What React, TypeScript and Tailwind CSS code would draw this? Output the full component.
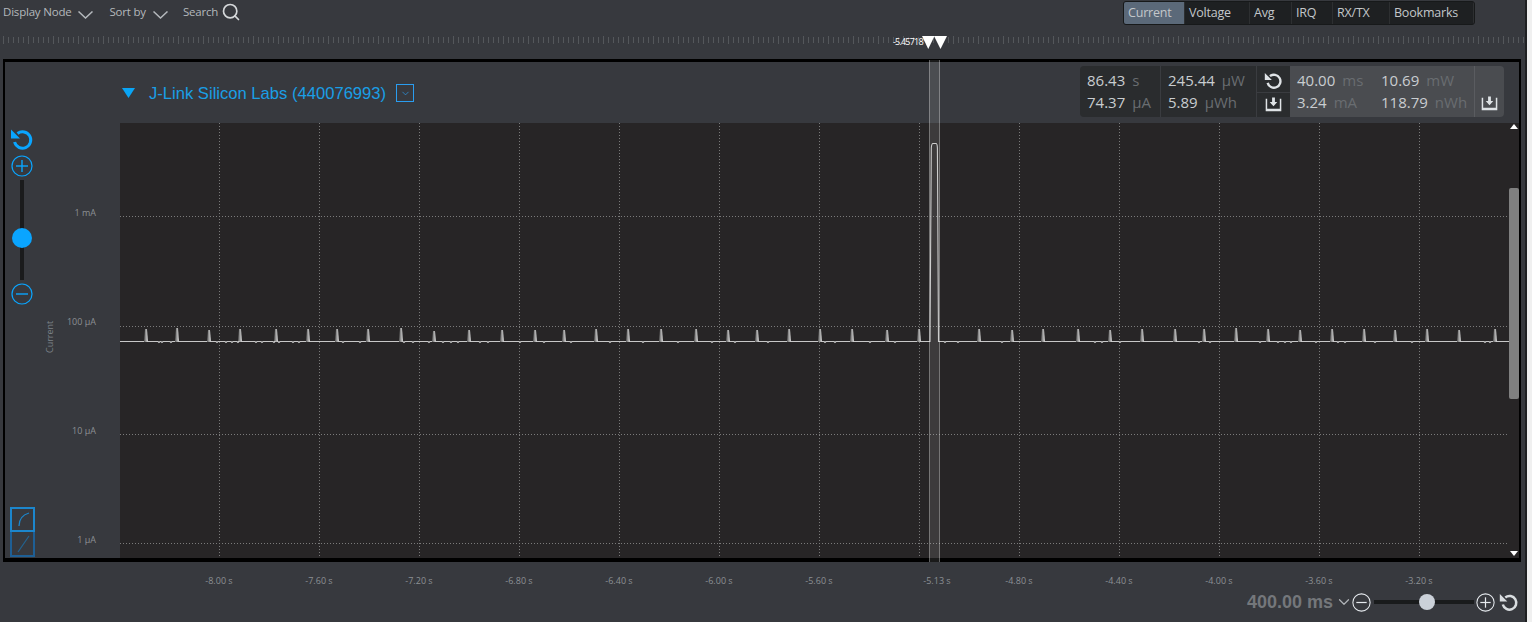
import { ChevronDown, Search } from "lucide-react";

const tabs = [
  { label: "Current", width: "w-[61px]", active: true },
  { label: "Voltage", width: "w-[65px]" },
  { label: "Avg", width: "w-[42px]" },
  { label: "IRQ", width: "w-[41px]" },
  { label: "RX/TX", width: "w-[57px]" },
  { label: "Bookmarks", width: "w-[84px]" },
];

const timeLabels = ["-8.00 s", "-7.60 s", "-7.20 s", "-6.80 s", "-6.40 s", "-6.00 s", "-5.60 s"];
const timeLabelsAfter = ["-4.80 s", "-4.40 s", "-4.00 s", "-3.60 s", "-3.20 s"];

// x position and top of every small peak, in page pixels
const peaks = [
  [146, 329], [177, 328], [209, 330], [240, 329], [276, 329], [308, 329], [337, 329], [368, 329],
  [401, 328], [434, 331], [469, 330], [502, 330], [535, 330], [564, 330], [596, 329], [628, 329],
  [661, 329], [696, 329], [728, 330], [757, 330], [789, 329], [820, 329], [852, 329], [887, 330],
  [919, 329], [979, 329], [1012, 330], [1043, 329], [1078, 329], [1110, 330], [1142, 329],
  [1175, 329], [1204, 329], [1236, 328], [1268, 329], [1300, 330], [1332, 329], [1364, 329],
  [1395, 330], [1427, 329], [1459, 330], [1495, 329],
];
const ripples = [159, 162, 171, 217, 226, 232, 238, 256, 262, 274, 279, 293, 299, 343, 360, 404, 413, 429, 443, 451, 458, 480, 488, 520, 544, 571, 610, 643, 678, 712, 735, 768, 825, 835, 870, 895, 945, 958, 1002, 1095, 1102, 1120, 1199, 1210, 1260, 1278, 1285, 1291, 1316, 1338, 1345, 1375, 1412, 1485, 1490];

const plotX = 120;
const plotY = 123;
const baseY = 218.5;

function tracePath() {
  const xs = [...peaks.map((p) => p[0]), ...ripples].sort((a, b) => a - b);
  let d = `M0 ${baseY}`;
  let bigDone = false;
  for (const px of xs) {
    const x = px - plotX;
    if (!bigDone && px > 930) {
      d += ` L810 ${baseY} L811.3 25 Q811.6 20.5 813 20.5 H816 Q817.2 20.5 817.4 25 L818.5 ${baseY}`;
      bigDone = true;
    }
    if (ripples.includes(px)) {
      d += ` L${x - 1} ${baseY} L${x} ${baseY + 1} L${x + 1} ${baseY}`;
    } else {
      d += ` L${x - 2} ${baseY} M${x + 2} ${baseY}`;
    }
  }
  return d + " L1389 " + baseY;
}

function Chevron({ className }: { className: string }) {
  return (
    <svg viewBox="0 0 15 8" className={`h-[8px] w-[15px] ${className}`} fill="none" stroke="currentColor" strokeWidth="1.5">
      <path d="M0.5 0.5L7.5 7L14.5 0.5" />
    </svg>
  );
}

function ResetIcon({ className }: { className: string }) {
  return (
    <svg viewBox="0 0 24 24" className={className} fill="none">
      <path d="M7.5 6.5A8.2 8.2 0 1 1 4.6 15" stroke="currentColor" strokeWidth="3" />
      <path d="M1 2.5V11.5H10Z" fill="currentColor" />
    </svg>
  );
}

function SaveIcon() {
  return (
    <svg viewBox="0 0 17 17" className="h-[16px] w-[17px] text-[#dfe3e6]" fill="none">
      <path d="M1 3V15.5H16V3" stroke="currentColor" strokeWidth="1.6" />
      <path d="M1 13.5H16V16H1Z" fill="currentColor" />
      <path d="M7 1.5H10V6.5H12.5L8.5 11L4.5 6.5H7Z" fill="currentColor" />
    </svg>
  );
}

function CircleButton({ plus, className, size }: { plus?: boolean; className: string; size: string }) {
  return (
    <svg viewBox="0 0 22 22" className={`${size} ${className}`} fill="none" stroke="currentColor">
      <circle cx="11" cy="11" r="10" strokeWidth="1.2" />
      <path d="M5 11H17" strokeWidth="1.4" />
      {plus && <path d="M11 5V17" strokeWidth="1.4" />}
    </svg>
  );
}

function Stat({ value, unit }: { value: string; unit: string }) {
  return (
    <div className="whitespace-nowrap">
      <span className="text-[#c9cdd0]">{value}</span>
      <span className="ml-[7px] text-[#696d71]">{unit}</span>
    </div>
  );
}

function Plot() {
  const hLines = [216, 326, 434, 543];
  const vLines = [219, 319, 419, 519, 619, 719, 819, 919, 1019, 1119, 1219, 1319, 1419];
  return (
    <svg viewBox="0 0 1399 435" className="h-[435px] w-[1399px]" fill="none">
      <defs>
        <linearGradient id="peak" x1="0" x2="1" y1="0" y2="0">
          <stop offset="0" stopColor="#5c5c5c" />
          <stop offset="0.5" stopColor="#9c9c9c" />
          <stop offset="1" stopColor="#e4e4e4" />
        </linearGradient>
      </defs>
      <g stroke="#7b7b7b" strokeDasharray="1 2">
        {hLines.map((y) => (
          <path key={y} d={`M0 ${y - plotY + 0.5}H1389`} />
        ))}
        {vLines.map((x) => (
          <path key={x} d={`M${x - plotX + 0.5} 0V435`} />
        ))}
      </g>
      {peaks.map(([x, top]) => (
        <path
          key={x}
          d={`M${x - plotX - 2} ${baseY + 0.5}L${x - plotX - 1} ${top - plotY}H${x - plotX + 1}L${x - plotX + 2} ${baseY + 0.5}Z`}
          fill="url(#peak)"
        />
      ))}
      <path d={tracePath()} stroke="#c8c8c8" strokeWidth="1.1" />
    </svg>
  );
}

export default function App() {
  return (
    <div
      className="flex h-[622px] w-[1532px] overflow-hidden bg-[#37393e] text-[11.5px] tracking-[-0.2px] text-[#b4b8bc]"
      style={{ fontFamily: '"Open Sans", sans-serif' }}
    >
      <div className="flex w-[1525px] flex-col">
        {/* top toolbar */}
        <div className="flex h-[26px] items-center justify-between pr-[50px] pl-[3px]">
          <div className="flex items-center pb-[2px]">
            <span>Display Node</span>
            <Chevron className="mt-[6px] ml-[7px]" />
            <span className="ml-[16px]">Sort by</span>
            <Chevron className="mt-[6px] ml-[7px]" />
            <span className="ml-[15px]">Search</span>
            <Search className="ml-[3px] h-[20px] w-[20px] text-[#d5d8da]" strokeWidth={2} />
          </div>
          <div className="flex h-[24px] overflow-hidden rounded-[3px] border border-[#17191a] bg-[#1e2022] text-[12.5px] text-[#c3c7ca]">
            {tabs.map((tab) => (
              <div
                key={tab.label}
                className={`flex items-center border-r border-[#2d2f31] pl-[4px] ${tab.width} ${tab.active ? "bg-[#5b6979]" : ""}`}
              >
                {tab.label}
              </div>
            ))}
          </div>
        </div>

        {/* time ruler */}
        <div className="relative h-[33px]">
          <svg className="mt-[9px] h-[12px] w-[1525px]" fill="none">
            <defs>
              <pattern id="ticks" width="25" height="12" patternUnits="userSpaceOnUse">
                <path d="M3.5 1V9M8.5 2V8M13.5 2V8M18.5 2V8M23.5 2V8" stroke="#54575b" />
              </pattern>
            </defs>
            <rect width="1525" height="12" fill="url(#ticks)" />
          </svg>
          <span className="absolute top-[10px] left-[893px] text-[9px] leading-[12px] tracking-[-0.8px] whitespace-nowrap text-white">
            -5.45718
          </span>
          <svg viewBox="0 0 25 13" className="absolute top-[10px] left-[922px] h-[13px] w-[25px]" fill="#fff">
            <path d="M0 0H12.5L6.25 13Z" />
            <path d="M12 0H25L18.5 13Z" />
          </svg>
        </div>

        {/* main panel */}
        <div className="relative ml-[3px] flex h-[503px] w-[1518px] flex-col border-x-2 border-t-[3px] border-b-4 border-black">
          <div className="flex h-[61px] items-center pr-[15px] pl-[117px] tracking-normal">
            <svg viewBox="0 0 13 10" className="h-[10px] w-[13px] text-[#0aa5f5]" fill="currentColor">
              <path d="M0 0H13L6.5 10Z" />
            </svg>
            <span
              className="mt-[3px] ml-[14px] text-[16.6px] text-[#1a9fe6]"
              style={{ fontFamily: '"Liberation Sans", sans-serif' }}
            >
              J-Link Silicon Labs (440076993)
            </span>
            <div className="mt-[1px] ml-[10px] flex h-[18px] w-[18px] items-center justify-center border border-[#2a9df0]">
              <ChevronDown className="h-[11px] w-[11px] text-[#2a9df0]" strokeWidth={1.5} />
            </div>

            {/* readouts */}
            <div className="mt-[-3px] ml-auto flex h-[51px] overflow-hidden rounded-[4px] text-[15px] leading-[22px]">
              <div className="flex bg-[#2a2c2e]">
                <div className="flex w-[81px] flex-col justify-center border-r border-[#3a3c40] pl-[7px]">
                  <Stat value="86.43" unit="s" />
                  <Stat value="74.37" unit="µA" />
                </div>
                <div className="flex w-[96px] flex-col justify-center border-r border-[#3a3c40] pl-[7px]">
                  <Stat value="245.44" unit="µW" />
                  <Stat value="5.89" unit="µWh" />
                </div>
                <div className="flex w-[33px] flex-col">
                  <div className="flex flex-1 items-center justify-center border-b border-[#3a3c40] pt-[3px]">
                    <ResetIcon className="h-[19px] w-[19px] text-[#dfe3e6]" />
                  </div>
                  <div className="flex flex-1 items-center justify-center pb-[1px]">
                    <SaveIcon />
                  </div>
                </div>
              </div>
              <div className="flex bg-[#4a4c50]">
                <div className="flex w-[91px] flex-col justify-center pl-[7px]">
                  <Stat value="40.00" unit="ms" />
                  <Stat value="3.24" unit="mA" />
                </div>
                <div className="flex w-[94px] flex-col justify-center border-r border-[#5a5c60]">
                  <Stat value="10.69" unit="mW" />
                  <Stat value="118.79" unit="nWh" />
                </div>
                <div className="flex w-[29px] items-end justify-center pb-[6px]">
                  <SaveIcon />
                </div>
              </div>
            </div>
          </div>

          <div className="flex flex-1">
            {/* left gutter */}
            <div className="flex w-[115px]">
              <div className="flex w-[34px] flex-col items-center pt-[4px] text-[#0aa5ff]">
                <ResetIcon className="h-[24px] w-[24px]" />
                <CircleButton plus className="mt-[4px]" size="h-[22px] w-[22px]" />
                <div className="relative mt-[3px] h-[100px] w-[4px] bg-[#1a1b1c]">
                  <div className="absolute top-[48px] left-[-8px] h-[20px] w-[20px] rounded-full bg-[#0aa5ff]" />
                </div>
                <CircleButton className="mt-[3px]" size="h-[22px] w-[22px]" />
                <div className="mt-auto mb-[1px] flex w-[25px] flex-col">
                  <div className="h-[25px] border-2 border-[#1c86cc]">
                    <svg viewBox="0 0 21 21" className="h-[21px] w-[21px]" fill="none" stroke="#1c86cc" strokeWidth="1.3">
                      <path d="M7 17C7 10 10 6 17 4" />
                    </svg>
                  </div>
                  <div className="h-[25px] border-x-2 border-b-2 border-[#1e5f95]">
                    <svg viewBox="0 0 21 21" className="h-[21px] w-[21px]" fill="none" stroke="#23628f" strokeWidth="1.2">
                      <path d="M6 20L17 4" />
                    </svg>
                  </div>
                </div>
              </div>
              <div className="flex flex-1 flex-col items-end pr-[24px] text-[9px] leading-[12px] tracking-normal text-[#8c9094]">
                <span className="mt-[84px]">1 mA</span>
                <div className="mt-[97px] flex w-full items-start justify-between">
                  <span className="mt-[3px] ml-[5px] h-[34px] rotate-180 text-[#7b8187] [writing-mode:vertical-rl]">Current</span>
                  <span>100 µA</span>
                </div>
                <span className="mt-[72px]">10 µA</span>
                <span className="mt-[97px]">1 µA</span>
              </div>
            </div>

            {/* chart */}
            <div className="relative flex-1 bg-[#272526]">
              <Plot />
              <div className="absolute top-[65px] right-0 h-[211px] w-[10px] rounded-[2px] bg-[#808080]" />
              <div className="absolute top-[1px] right-[1px] h-0 w-0 border-x-[4px] border-b-[5px] border-x-transparent border-b-white" />
              <div className="absolute right-[1px] bottom-[2px] h-0 w-0 border-x-[4px] border-t-[5px] border-x-transparent border-t-white" />
            </div>
          </div>

          {/* selected range */}
          <div className="absolute top-[-2px] bottom-[-4px] left-[924px] w-[11px] border-x border-white/30 bg-white/10" />
        </div>

        {/* time axis and zoom */}
        <div className="flex flex-1 flex-col tracking-normal">
          <div className="mt-[13px] flex pl-[169px] text-[9px] leading-[12px] text-[#8c9094]">
            {timeLabels.map((label) => (
              <span key={label} className="w-[100px] text-center">
                {label}
              </span>
            ))}
            <span className="w-[100px] pl-[36px] text-center">-5.13 s</span>
            {timeLabelsAfter.map((label) => (
              <span key={label} className="w-[100px] text-center">
                {label}
              </span>
            ))}
          </div>
          <div className="mt-[4px] flex items-center pl-[1247px] text-[#d9dde0]">
            <span
              className="w-[87px] text-[18px] leading-[22px] font-bold whitespace-nowrap text-[#74777b]"
              style={{ fontFamily: '"Liberation Sans", sans-serif' }}
            >
              400.00 ms
            </span>
            <ChevronDown className="ml-[1px] h-[18px] w-[18px] text-[#b0b4b8]" strokeWidth={1.6} />
            <CircleButton className="ml-[-1px] text-[#e6eaee]" size="h-[19px] w-[19px]" />
            <div className="relative ml-[3px] h-[4px] w-[100px] bg-[#191b1c]">
              <div className="absolute top-[-6px] left-[45px] h-[16px] w-[16px] rounded-full bg-[#cbd1d9]" />
            </div>
            <CircleButton plus className="ml-[2px] text-[#e6eaee]" size="h-[19px] w-[19px]" />
            <ResetIcon className="ml-[4px] h-[20px] w-[20px]" />
          </div>
        </div>
      </div>
      <div className="w-[2px] bg-[#1f2022]" />
      <div className="flex-1 bg-[#f0f0f0]" />
    </div>
  );
}
